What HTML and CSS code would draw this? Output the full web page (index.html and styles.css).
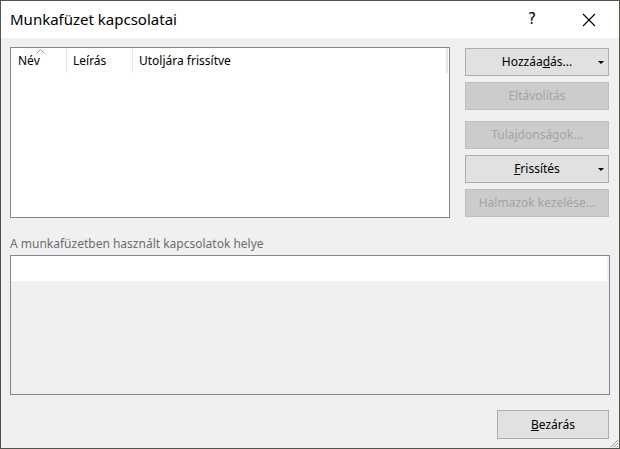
FILE: index.html
```html
<!DOCTYPE html>
<html lang="hu">
<head>
<meta charset="utf-8">
<title>Munkafüzet kapcsolatai</title>
<link rel="stylesheet" href="styles.css">
</head>
<body>
<div class="window">
  <div class="titlebar">
    <span class="title">Munkafüzet kapcsolatai</span>
    <span class="help">?</span>
    <span class="close">
      <svg width="14" height="14" viewBox="0 0 14 14"><path d="M1 1 L13 13 M13 1 L1 13" stroke="#000" stroke-width="1.1" fill="none"/></svg>
    </span>
  </div>
  <div class="content">
    <div class="top">
      <div class="listbox">
        <div class="header">
          <div class="col col-name">Név<svg class="caret" width="9" height="5" viewBox="0 0 9 5"><path d="M0.5 4.5 L4.5 0.5 L8.5 4.5" stroke="#9a9a9a" fill="none"/></svg></div>
          <div class="col col-desc">Leírás</div>
          <div class="col col-date">Utoljára frissítve</div>
          <div class="col col-end"></div>
        </div>
      </div>
      <div class="buttons">
        <div class="btn split">Hozzáa<u>d</u>ás...<span class="arrow"></span></div>
        <div class="btn disabled gap6">Eltávolítás</div>
        <div class="btn disabled gap11">Tulajdonságok...</div>
        <div class="btn split gap6"><u>F</u>rissítés<span class="arrow"></span></div>
        <div class="btn disabled gap6">Halmazok kezelése...</div>
      </div>
    </div>
    <div class="label">A munkafüzetben használt kapcsolatok helye</div>
    <div class="usagebox">
      <div class="usagerow"></div>
    </div>
    <div class="footer">
      <div class="btn close-btn"><u>B</u>ezárás</div>
    </div>
  </div>
  <svg class="grip" width="10" height="10" viewBox="0 0 10 10">
    <path d="M9 2 L2 9 M9 5 L5 9 M9 8 L8 9" stroke="#a0a0a0" stroke-width="1" fill="none"/>
  </svg>
</div>
</body>
</html>
```
FILE: styles.css
```css
* { box-sizing: border-box; }
html, body { margin: 0; padding: 0; }
body {
  font-family: "Noto Sans", "Open Sans", "Liberation Sans", sans-serif;
  font-size: 12px;
  color: #000;
  background: #f0f0f0;
}
.window {
  position: relative;
  width: 620px;
  height: 449px;
  border: 1px solid #4c5848;
  background: #f0f0f0;
  display: flex;
  flex-direction: column;
  overflow: hidden;
}
.titlebar {
  height: 37px;
  flex: none;
  background: #fff;
  display: flex;
  align-items: center;
  padding-left: 9px;
}
.title {
  font-size: 15px;
  flex: 1;
  padding-bottom: 1px;
}
.help {
  font-family: "DejaVu Sans", sans-serif;
  font-size: 15px;
  width: 12px;
  margin-right: 42px;
  padding-bottom: 1px;
}
.close {
  width: 14px;
  height: 14px;
  margin-right: 23px;
  display: flex;
}
.content {
  flex: 1;
  padding: 9px 10px 0 9px;
  display: flex;
  flex-direction: column;
}
.top {
  display: flex;
  gap: 15px;
}
.listbox {
  width: 440px;
  height: 171px;
  border: 1px solid #828790;
  background: #fff;
}
.header {
  display: flex;
  height: 25px;
}
.col {
  position: relative;
  height: 25px;
  line-height: 26px;
  padding-left: 7px;
  border-right: 1px solid #e5e5e5;
}
.col-name { width: 56px; }
.col-desc { width: 66px; padding-left: 6px; }
.col-date { width: 314px; padding-left: 6px; }
.col-end { width: 1px; padding: 0; }
.caret {
  position: absolute;
  left: 25px;
  top: 1px;
}
.buttons {
  width: 144px;
  padding-top: 1px;
  display: flex;
  flex-direction: column;
}
.btn {
  position: relative;
  height: 28px;
  border: 1px solid #adadad;
  background: #e1e1e1;
  display: flex;
  align-items: center;
  justify-content: center;
  padding-bottom: 1px;
}
.btn.disabled {
  background: #cccccc;
  border-color: #bfbfbf;
  color: #a3a3a3;
}
.gap6 { margin-top: 6px; }
.gap11 { margin-top: 11px; }
.arrow {
  position: absolute;
  right: 4px;
  top: 12px;
  width: 0;
  height: 0;
  border-left: 3px solid transparent;
  border-right: 3px solid transparent;
  border-top: 3px solid #000;
}
.label {
  margin-top: 18px;
  color: #6d6d6d;
  height: 19px;
  line-height: 16px;
}
.usagebox {
  width: 600px;
  height: 140px;
  border: 1px solid #828790;
  background: #f0f0f0;
  padding: 0 2px 0 0;
}
.usagerow {
  height: 25px;
  background: #fff;
}
.footer {
  display: flex;
  justify-content: flex-end;
  margin-top: 15px;
}
.close-btn {
  width: 112px;
  height: 29px;
}
.grip {
  position: absolute;
  right: 0;
  bottom: 0;
}
```
